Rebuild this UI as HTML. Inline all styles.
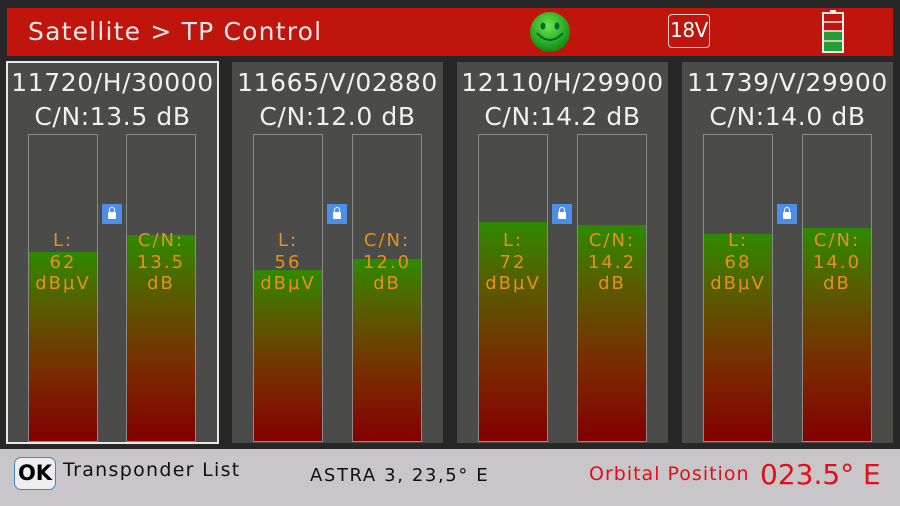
<!DOCTYPE html>
<html><head><meta charset="utf-8"><style>
*{margin:0;padding:0;box-sizing:border-box}
body{width:900px;height:506px;background:#272727;font-family:"DejaVu Sans","Liberation Sans",sans-serif;position:relative;overflow:hidden}
.hdr{position:absolute;left:7px;top:8px;width:886px;height:48px;background:#c0150c}
.title{position:absolute;left:21px;top:9px;color:#f4e8e8;font-size:25px;letter-spacing:1.2px}
.p{position:absolute;top:62px;width:211px;height:381px;background:#4b4c4a}
.p.sel{outline:2px solid #e8e8e8;outline-offset:-1px}
.f{position:absolute;left:0;width:100%;text-align:center;color:#f0f0f0;font-size:25px;letter-spacing:0.6px;white-space:nowrap}
.bar{position:absolute;top:72px;width:70px;height:308px;border:1px solid #8a8a8a;background:#4b4c4a;overflow:hidden}
.fill{position:absolute;left:0;right:0;bottom:0;background:linear-gradient(#2e8a00,#5a5a00 30%,#7a2a00 65%,#820000)}
.t{position:absolute;left:-10px;right:-10px;top:95px;text-align:center;color:#e8901c;font-size:18px;line-height:21.5px;letter-spacing:2px}
.lock{position:absolute;left:95px;top:142px;width:20px;height:20px;background:#4d8ee8}
.foot{position:absolute;left:0;top:449px;width:900px;height:57px;background:#c8c6c8}
</style></head><body>
<div class="hdr">
<div class="title">Satellite &gt; TP Control</div>
<svg style="position:absolute;left:521px;top:2px" width="44" height="44"><defs><radialGradient id="g" cx="45%" cy="35%" r="65%"><stop offset="0" stop-color="#6ae84a"/><stop offset="1" stop-color="#0f8a10"/></radialGradient></defs><circle cx="22" cy="22" r="20" fill="url(#g)"/><ellipse cx="15" cy="16" rx="2.5" ry="3.5" fill="#063"/><ellipse cx="29" cy="16" rx="2.5" ry="3.5" fill="#063"/><path d="M9 23 Q22 37 35 23" stroke="#063" stroke-width="2" fill="none"/></svg>
<div style="position:absolute;left:661px;top:6px;width:42px;height:34px;border:1.5px solid #f0d0d0;border-radius:4px;color:#fff;font-size:20px;text-align:center;line-height:31px;letter-spacing:-0.5px">18V</div>
<svg style="position:absolute;left:815px;top:2px" width="24" height="44"><rect x="8" y="0" width="6" height="3" fill="#eee"/><rect x="1" y="3" width="20" height="39" fill="none" stroke="#eee" stroke-width="2"/><rect x="2" y="21" width="18" height="9" fill="#1fa030"/><rect x="2" y="32" width="18" height="9" fill="#1fa030"/><line x1="2" y1="12" x2="20" y2="12" stroke="#eee" stroke-width="1.5"/><line x1="2" y1="21" x2="20" y2="21" stroke="#eee" stroke-width="1.5"/><line x1="2" y1="31" x2="20" y2="31" stroke="#eee" stroke-width="1.5"/></svg>
</div>

<div class="p sel" style="left:7px">
<div class="f" style="top:6px">11720/H/30000</div><div class="f" style="top:40px">C/N:13.5 dB</div>
<div class="bar" style="left:21px"><div class="fill" style="top:117px"></div><div class="t">L:<br>62<br>dBµV</div></div>
<div class="lock"></div>
<div class="bar" style="left:119px"><div class="fill" style="top:100px"></div><div class="t">C/N:<br>13.5<br>dB</div></div>
</div>
<div class="p" style="left:232px">
<div class="f" style="top:6px">11665/V/02880</div><div class="f" style="top:40px">C/N:12.0 dB</div>
<div class="bar" style="left:21px"><div class="fill" style="top:135px"></div><div class="t">L:<br>56<br>dBµV</div></div>
<div class="lock"></div>
<div class="bar" style="left:120px"><div class="fill" style="top:124px"></div><div class="t">C/N:<br>12.0<br>dB</div></div>
</div>
<div class="p" style="left:457px">
<div class="f" style="top:6px">12110/H/29900</div><div class="f" style="top:40px">C/N:14.2 dB</div>
<div class="bar" style="left:21px"><div class="fill" style="top:87px"></div><div class="t">L:<br>72<br>dBµV</div></div>
<div class="lock"></div>
<div class="bar" style="left:120px"><div class="fill" style="top:90px"></div><div class="t">C/N:<br>14.2<br>dB</div></div>
</div>
<div class="p" style="left:682px">
<div class="f" style="top:6px">11739/V/29900</div><div class="f" style="top:40px">C/N:14.0 dB</div>
<div class="bar" style="left:21px"><div class="fill" style="top:99px"></div><div class="t">L:<br>68<br>dBµV</div></div>
<div class="lock"></div>
<div class="bar" style="left:120px"><div class="fill" style="top:93px"></div><div class="t">C/N:<br>14.0<br>dB</div></div>
</div>

<div class="foot">
<div style="position:absolute;left:14px;top:8px;width:42px;height:33px;border:1.5px solid #3a8ad0;border-radius:7px;background:#eee;font-weight:bold;font-size:21px;text-align:center;line-height:30px;color:#000">OK</div>
<div style="position:absolute;left:63px;top:10px;font-size:19px;color:#111;letter-spacing:1.3px">Transponder List</div>
<div style="position:absolute;left:310px;top:16px;font-size:18px;color:#111;letter-spacing:1.6px">ASTRA 3, 23,5° E</div>
<div style="position:absolute;left:589px;top:14px;font-size:19px;color:#e0101a;letter-spacing:1px">Orbital Position</div>
<div style="position:absolute;left:760px;top:9px;font-size:28px;color:#e0101a">023.5° E</div>
</div>
<style>.lock::after{content:"";position:absolute;left:6px;top:8px;width:8px;height:7px;background:#fff;border-radius:1px}.lock::before{content:"";position:absolute;left:7px;top:3px;width:4px;height:6px;border:1.5px solid #fff;border-bottom:none;border-radius:3px 3px 0 0}</style>
</body></html>
